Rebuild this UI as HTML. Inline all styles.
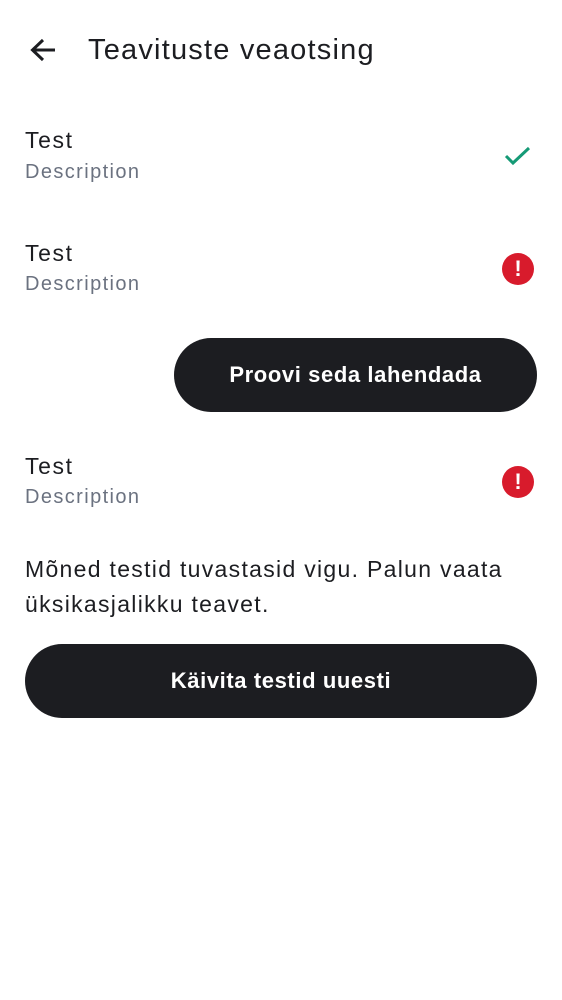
<!DOCTYPE html>
<html><head><meta charset="utf-8"><style>
body{margin:0;width:562px;height:1000px;background:#fff;font-family:"Liberation Sans",sans-serif;color:#1c1d21;position:relative;overflow:hidden}
.a{position:absolute}
.t{font-size:23px;left:25px;letter-spacing:1.6px}
.d{font-size:20px;color:#6b7280;left:25px;letter-spacing:1.4px}
.btn{position:absolute;background:#1c1d21;color:#fff;border-radius:37px;height:74px;display:flex;align-items:center;justify-content:center;font-size:22px;font-weight:600;letter-spacing:0.6px}
.err{position:absolute;width:32px;height:32px;border-radius:50%;background:#d81b2c;color:#fff;font-weight:bold;font-size:22px;text-align:center;line-height:32px}
</style></head><body>
<svg class="a" style="left:29px;top:37px" width="28" height="26" viewBox="0 0 28 26"><path d="M26 13H4M14 3L3.5 13L14 23" fill="none" stroke="#1c1d21" stroke-width="3"/></svg>
<div class="a" style="left:88px;top:34px;font-size:29px;letter-spacing:1.2px">Teavituste veaotsing</div>

<div class="a t" style="top:127px">Test</div>
<div class="a d" style="top:161px">Description</div>
<svg class="a" style="left:504px;top:146px" width="28" height="20" viewBox="0 0 28 20"><path d="M2 10L9 17L25 2" fill="none" stroke="#159a76" stroke-width="3"/></svg>

<div class="a t" style="top:240px">Test</div>
<div class="a d" style="top:273px">Description</div>
<div class="err" style="left:502px;top:253px">!</div>

<div class="btn" style="left:174px;top:338px;width:363px">Proovi seda lahendada</div>

<div class="a t" style="top:453px">Test</div>
<div class="a d" style="top:486px">Description</div>
<div class="err" style="left:502px;top:466px">!</div>

<div class="a" style="left:25px;top:552px;font-size:23px;line-height:35px;width:530px;letter-spacing:1.3px">Mõned testid tuvastasid vigu. Palun vaata üksikasjalikku teavet.</div>

<div class="btn" style="left:25px;top:644px;width:512px">Käivita testid uuesti</div>
</body></html>
